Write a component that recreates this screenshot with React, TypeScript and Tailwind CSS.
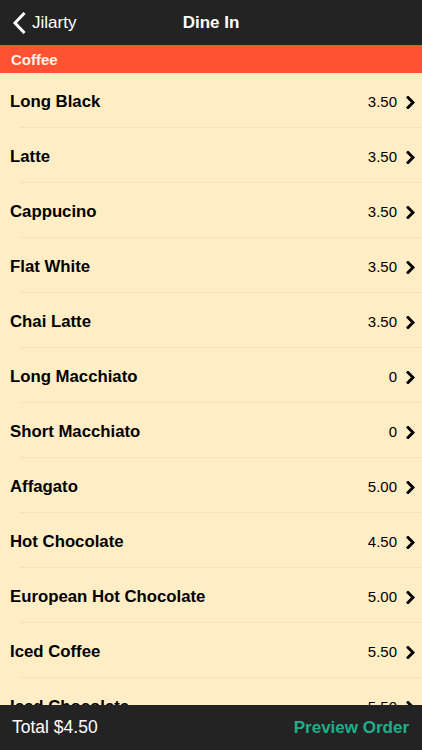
import React from "react";

const items: [string, string][] = [
  ["Long Black", "3.50"],
  ["Latte", "3.50"],
  ["Cappucino", "3.50"],
  ["Flat White", "3.50"],
  ["Chai Latte", "3.50"],
  ["Long Macchiato", "0"],
  ["Short Macchiato", "0"],
  ["Affagato", "5.00"],
  ["Hot Chocolate", "4.50"],
  ["European Hot Chocolate", "5.00"],
  ["Iced Coffee", "5.50"],
  ["Iced Chocolate", "5.50"],
  ["Iced Mocha", "5.50"],
];

function Chevron() {
  return (
    <svg width="9" height="13" viewBox="0 0 9 13" className="ml-[9px]">
      <polyline points="2,1.5 7,6.5 2,11.5" fill="none" stroke="#000" strokeWidth="3" strokeLinecap="square" strokeLinejoin="miter" />
    </svg>
  );
}

export default function App() {
  return (
    <div className="w-[422px] h-[750px] flex flex-col bg-[#ffedc5] overflow-hidden" style={{ fontFamily: '"Liberation Sans", Arial, sans-serif' }}>
      <div className="h-[45px] shrink-0 bg-[#232323] relative flex items-center">
        <div className="flex items-center pl-[12px] text-white">
          <svg width="14" height="22" viewBox="0 0 14 22">
            <polyline points="11.5,2 3,11 11.5,20" fill="none" stroke="#fff" strokeWidth="3" strokeLinecap="square" />
          </svg>
          <span className="ml-[6px] text-[17px]">Jilarty</span>
        </div>
        <div className="absolute left-0 right-0 text-center text-white font-bold text-[17px] pointer-events-none">Dine In</div>
      </div>
      <div className="h-[28px] shrink-0 bg-[#ff5233] flex items-center pl-[11px] pt-[2px] text-[#fff3ea] text-[15px] font-bold">Coffee</div>
      <div className="flex-1 overflow-hidden">
        {items.map(([name, price]) => (
          <div key={name} className="flex flex-col">
            <div className="h-[54px] flex items-center pl-[10px] pr-[7px] pt-[4px]">
              <span className="flex-1 text-[16.75px] font-bold text-black">{name}</span>
              <span className="text-[15px] text-black">{price}</span>
              <Chevron />
            </div>
            <div className="h-px ml-[20px] bg-[#f6e3ba]" />
          </div>
        ))}
      </div>
      <div className="h-[45px] shrink-0 bg-[#232323] flex items-center justify-between pl-[12px] pr-[13px]">
        <span className="text-white text-[17.5px]">Total $4.50</span>
        <span className="text-[#1fae8a] text-[17px] font-bold">Preview Order</span>
      </div>
    </div>
  );
}
